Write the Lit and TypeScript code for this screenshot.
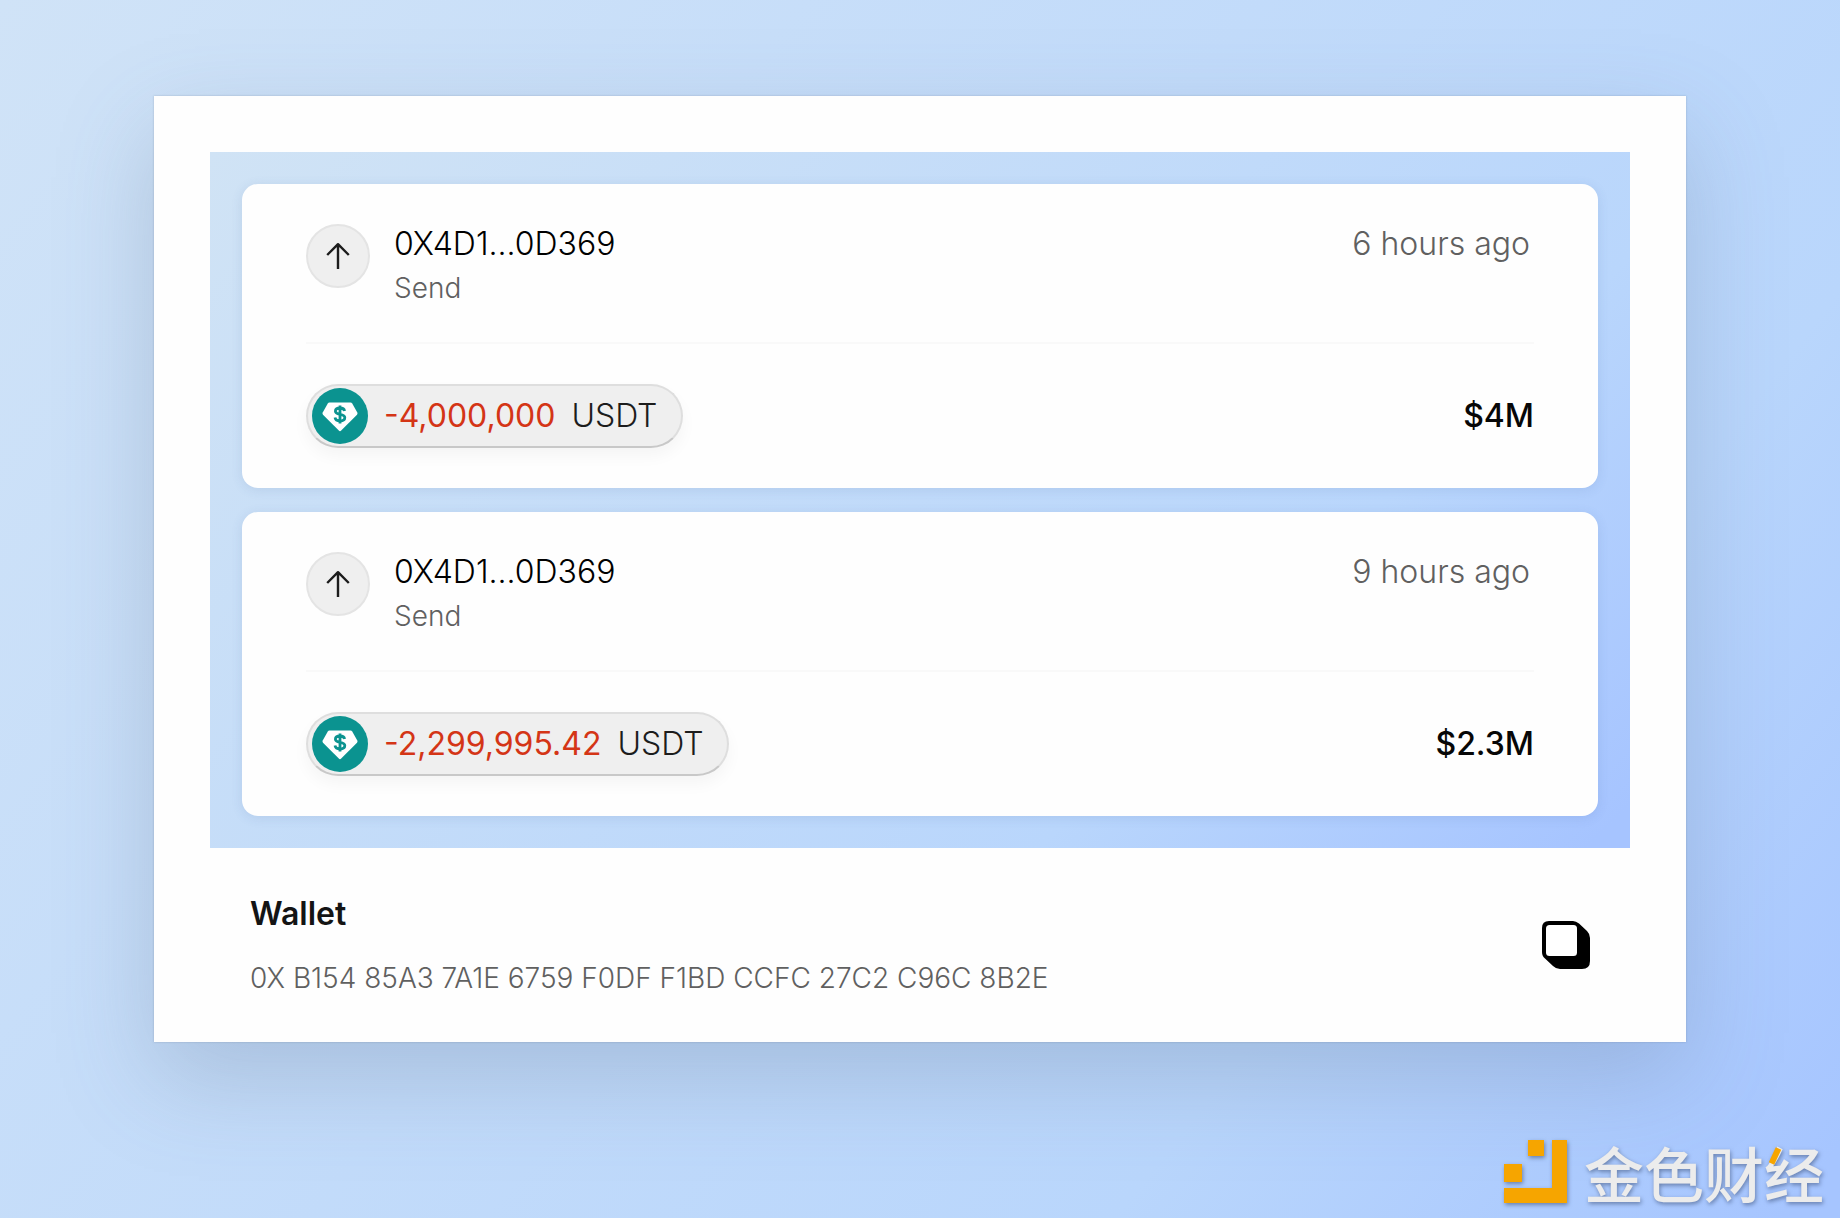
import { LitElement, html, css, svg } from "lit";
import { customElement, property } from "lit/decorators.js";

interface Transfer {
  address: string;
  kind: string;
  age: string;
  amount: string;
  token: string;
  value: string;
}

const TRANSFERS: Transfer[] = [
  { address: "0X4D1...0D369", kind: "Send", age: "6 hours ago", amount: "-4,000,000", token: "USDT", value: "$4M" },
  { address: "0X4D1...0D369", kind: "Send", age: "9 hours ago", amount: "-2,299,995.42", token: "USDT", value: "$2.3M" },
];

const WALLET = "0X B154 85A3 7A1E 6759 F0DF F1BD CCFC 27C2 C96C 8B2E";

const arrowUp = svg`<svg class="arrow" viewBox="0 0 24 28" fill="none" stroke="#1c1c1c" stroke-width="2.4" aria-hidden="true">
  <path d="M12 27V2.4M1.2 13 12 2.2 22.8 13" stroke-linejoin="round"/>
</svg>`;

const coin = svg`<svg class="coin" viewBox="0 0 56 56" aria-hidden="true">
  <circle cx="28" cy="28" r="28" fill="#0b9390"/>
  <path d="M17.5 14.5H38.5Q39.6 14.5 40.2 15.5L45.3 24.6Q45.9 25.8 45 26.8L29.2 42.6Q28 43.8 26.8 42.6L11 26.8Q10.1 25.8 10.7 24.6L15.8 15.5Q16.4 14.5 17.5 14.5Z" fill="#fff"/>
  <path d="M32.6 23C32.2 20.8 30.4 20 28 20C25.4 20 23.4 21.2 23.4 23.2C23.4 27.8 32.8 24.8 32.8 29.6C32.8 31.8 30.6 33 28 33C25.2 33 23.4 31.8 23 29.6M28 17.6V35.4" fill="none" stroke="#0b9390" stroke-width="2.8"/>
</svg>`;

@customElement("transfer-card")
export class TransferCard extends LitElement {
  @property({ attribute: false }) transfer!: Transfer;

  static styles = css`
    :host {
      display: block;
      background: #fefefe;
      border-radius: 16px;
      padding: 40px 64px;
      box-shadow: 0 2px 12px rgba(60, 90, 150, 0.12);
    }
    .head {
      display: flex;
      gap: 24px;
      padding-bottom: 36px;
      border-bottom: 2px solid #f9f9f9;
      color: #070707;
    }
    .direction {
      box-sizing: border-box;
      flex: none;
      width: 64px;
      height: 64px;
      border: 2px solid #e4e4e4;
      border-radius: 50%;
      background: #efefef;
      display: grid;
      place-items: center;
    }
    .arrow {
      width: 24px;
      height: 28px;
    }
    .party {
      flex: 1;
    }
    .address,
    .age {
      margin: 0;
      font-size: 32px;
      line-height: 40px;
      font-weight: 350;
    }
    .address {
      color: #000;
    }
    .age {
      color: #606060;
      padding-right: 4px;
    }
    .kind {
      margin: 6px 0 0;
      font-size: 28px;
      line-height: 36px;
      font-weight: 350;
      color: #606060;
    }
    .foot {
      display: flex;
      align-items: center;
      justify-content: space-between;
      padding-top: 40px;
    }
    .pill {
      box-sizing: border-box;
      display: flex;
      align-items: center;
      height: 64px;
      padding: 0 24px 0 4px;
      border: 2px solid #dedede;
      border-bottom-color: #c8c8c8;
      border-radius: 32px;
      background: #efefef;
      box-shadow: 0 8px 16px rgba(0, 0, 0, 0.04);
      font-size: 32px;
      line-height: 40px;
      color: #1c1c1c;
    }
    .coin {
      width: 56px;
      height: 56px;
      margin-right: 16px;
    }
    .amount {
      color: #d43516;
      margin-right: 16px;
    }
    .token {
      font-weight: 350;
    }
    .value {
      font-size: 32px;
      line-height: 40px;
      font-weight: 500;
      color: #070707;
    }
  `;

  render() {
    const t = this.transfer;
    return html`
      <div class="head">
        <span class="direction">${arrowUp}</span>
        <div class="party">
          <h2 class="address">${t.address}</h2>
          <p class="kind">${t.kind}</p>
        </div>
        <p class="age">${t.age}</p>
      </div>
      <div class="foot">
        <div class="pill">${coin}<span class="amount">${t.amount}</span><span class="token">${t.token}</span></div>
        <span class="value">${t.value}</span>
      </div>
    `;
  }
}

@customElement("app-root")
export class AppRoot extends LitElement {
  static styles = css`
    :host {
      box-sizing: border-box;
      display: flex;
      flex-direction: column;
      justify-content: space-between;
      gap: 32px;
      min-height: 100vh;
      padding: 96px 16px 14px;
      background: linear-gradient(128deg, #d0e3f7 0%, #b9d6fc 74%, #a6c5ff 98%);
      font-family: Inter, "Liberation Sans", sans-serif;
    }
    .panel {
      margin: 0 138px;
      padding: 56px;
      padding-bottom: 0;
      background: #fefefe;
      box-shadow: 0 0 2px rgba(80, 90, 110, 0.3), 0 36px 90px rgba(90, 110, 140, 0.26);
    }
    .list {
      display: flex;
      flex-direction: column;
      gap: 24px;
      padding: 32px;
      background: linear-gradient(135deg, #d0e3f5 0%, #b9d6fc 72%, #a6c4ff 98%);
    }
    .wallet {
      display: flex;
      align-items: center;
      justify-content: space-between;
      padding: 46px 40px;
    }
    .title {
      margin: 0 0 26px;
      font-size: 32px;
      line-height: 40px;
      font-weight: 600;
      color: #141414;
    }
    .hash {
      margin: 0;
      font-size: 28px;
      line-height: 36px;
      font-weight: 350;
      color: #606060;
    }
    .copy {
      display: block;
      padding: 0;
      border: 0;
      background: none;
      cursor: pointer;
    }
    .copy svg {
      display: block;
      width: 48px;
      height: 48px;
    }
    .brand {
      display: flex;
      align-items: center;
      justify-content: flex-end;
      gap: 16px;
      filter: drop-shadow(1px 2px 2px rgba(60, 80, 120, 0.6));
    }
    .mark {
      width: 64px;
      height: 64px;
    }
    .word {
      position: relative;
      font-family: "Noto Sans CJK SC", sans-serif;
      font-size: 60px;
      line-height: 64px;
      font-weight: 500;
      color: #ececec;
    }
    .accent {
      position: absolute;
      right: 42px;
      top: 6px;
      width: 14px;
      height: 20px;
    }
  `;

  render() {
    return html`
      <main class="panel">
        <section class="list" aria-label="Transfers">
          ${TRANSFERS.map((t) => html`<transfer-card .transfer=${t}></transfer-card>`)}
        </section>
        <section class="wallet">
          <div>
            <h1 class="title">Wallet</h1>
            <p class="hash">${WALLET}</p>
          </div>
          <button class="copy" type="button" aria-label="Copy">
            <svg viewBox="0 0 48 48" aria-hidden="true">
              <path d="M7 0H31Q34 0 37 2.5L45 10Q48 13 48 17V40Q48 48 40 48H18Q14 48 11 45L3 37.5Q0 35 0 31V7Q0 0 7 0Z" fill="#000"/>
              <rect x="4" y="4" width="31" height="31" rx="3.5" fill="#fff"/>
            </svg>
          </button>
        </section>
      </main>
      <footer class="brand">
        <svg class="mark" viewBox="0 0 64 64" fill="#f6a500" aria-hidden="true">
          <path d="M24 0H40V16H24ZM0 24H18V42H0ZM48 0H63V63H0V48H48Z"/>
        </svg>
        <span class="word">金色财经<svg class="accent" viewBox="0 0 14 20" aria-hidden="true"><path d="M10.5 2.5 3.5 17.5" stroke="#f6a500" stroke-width="6"/></svg></span>
      </footer>
    `;
  }
}
